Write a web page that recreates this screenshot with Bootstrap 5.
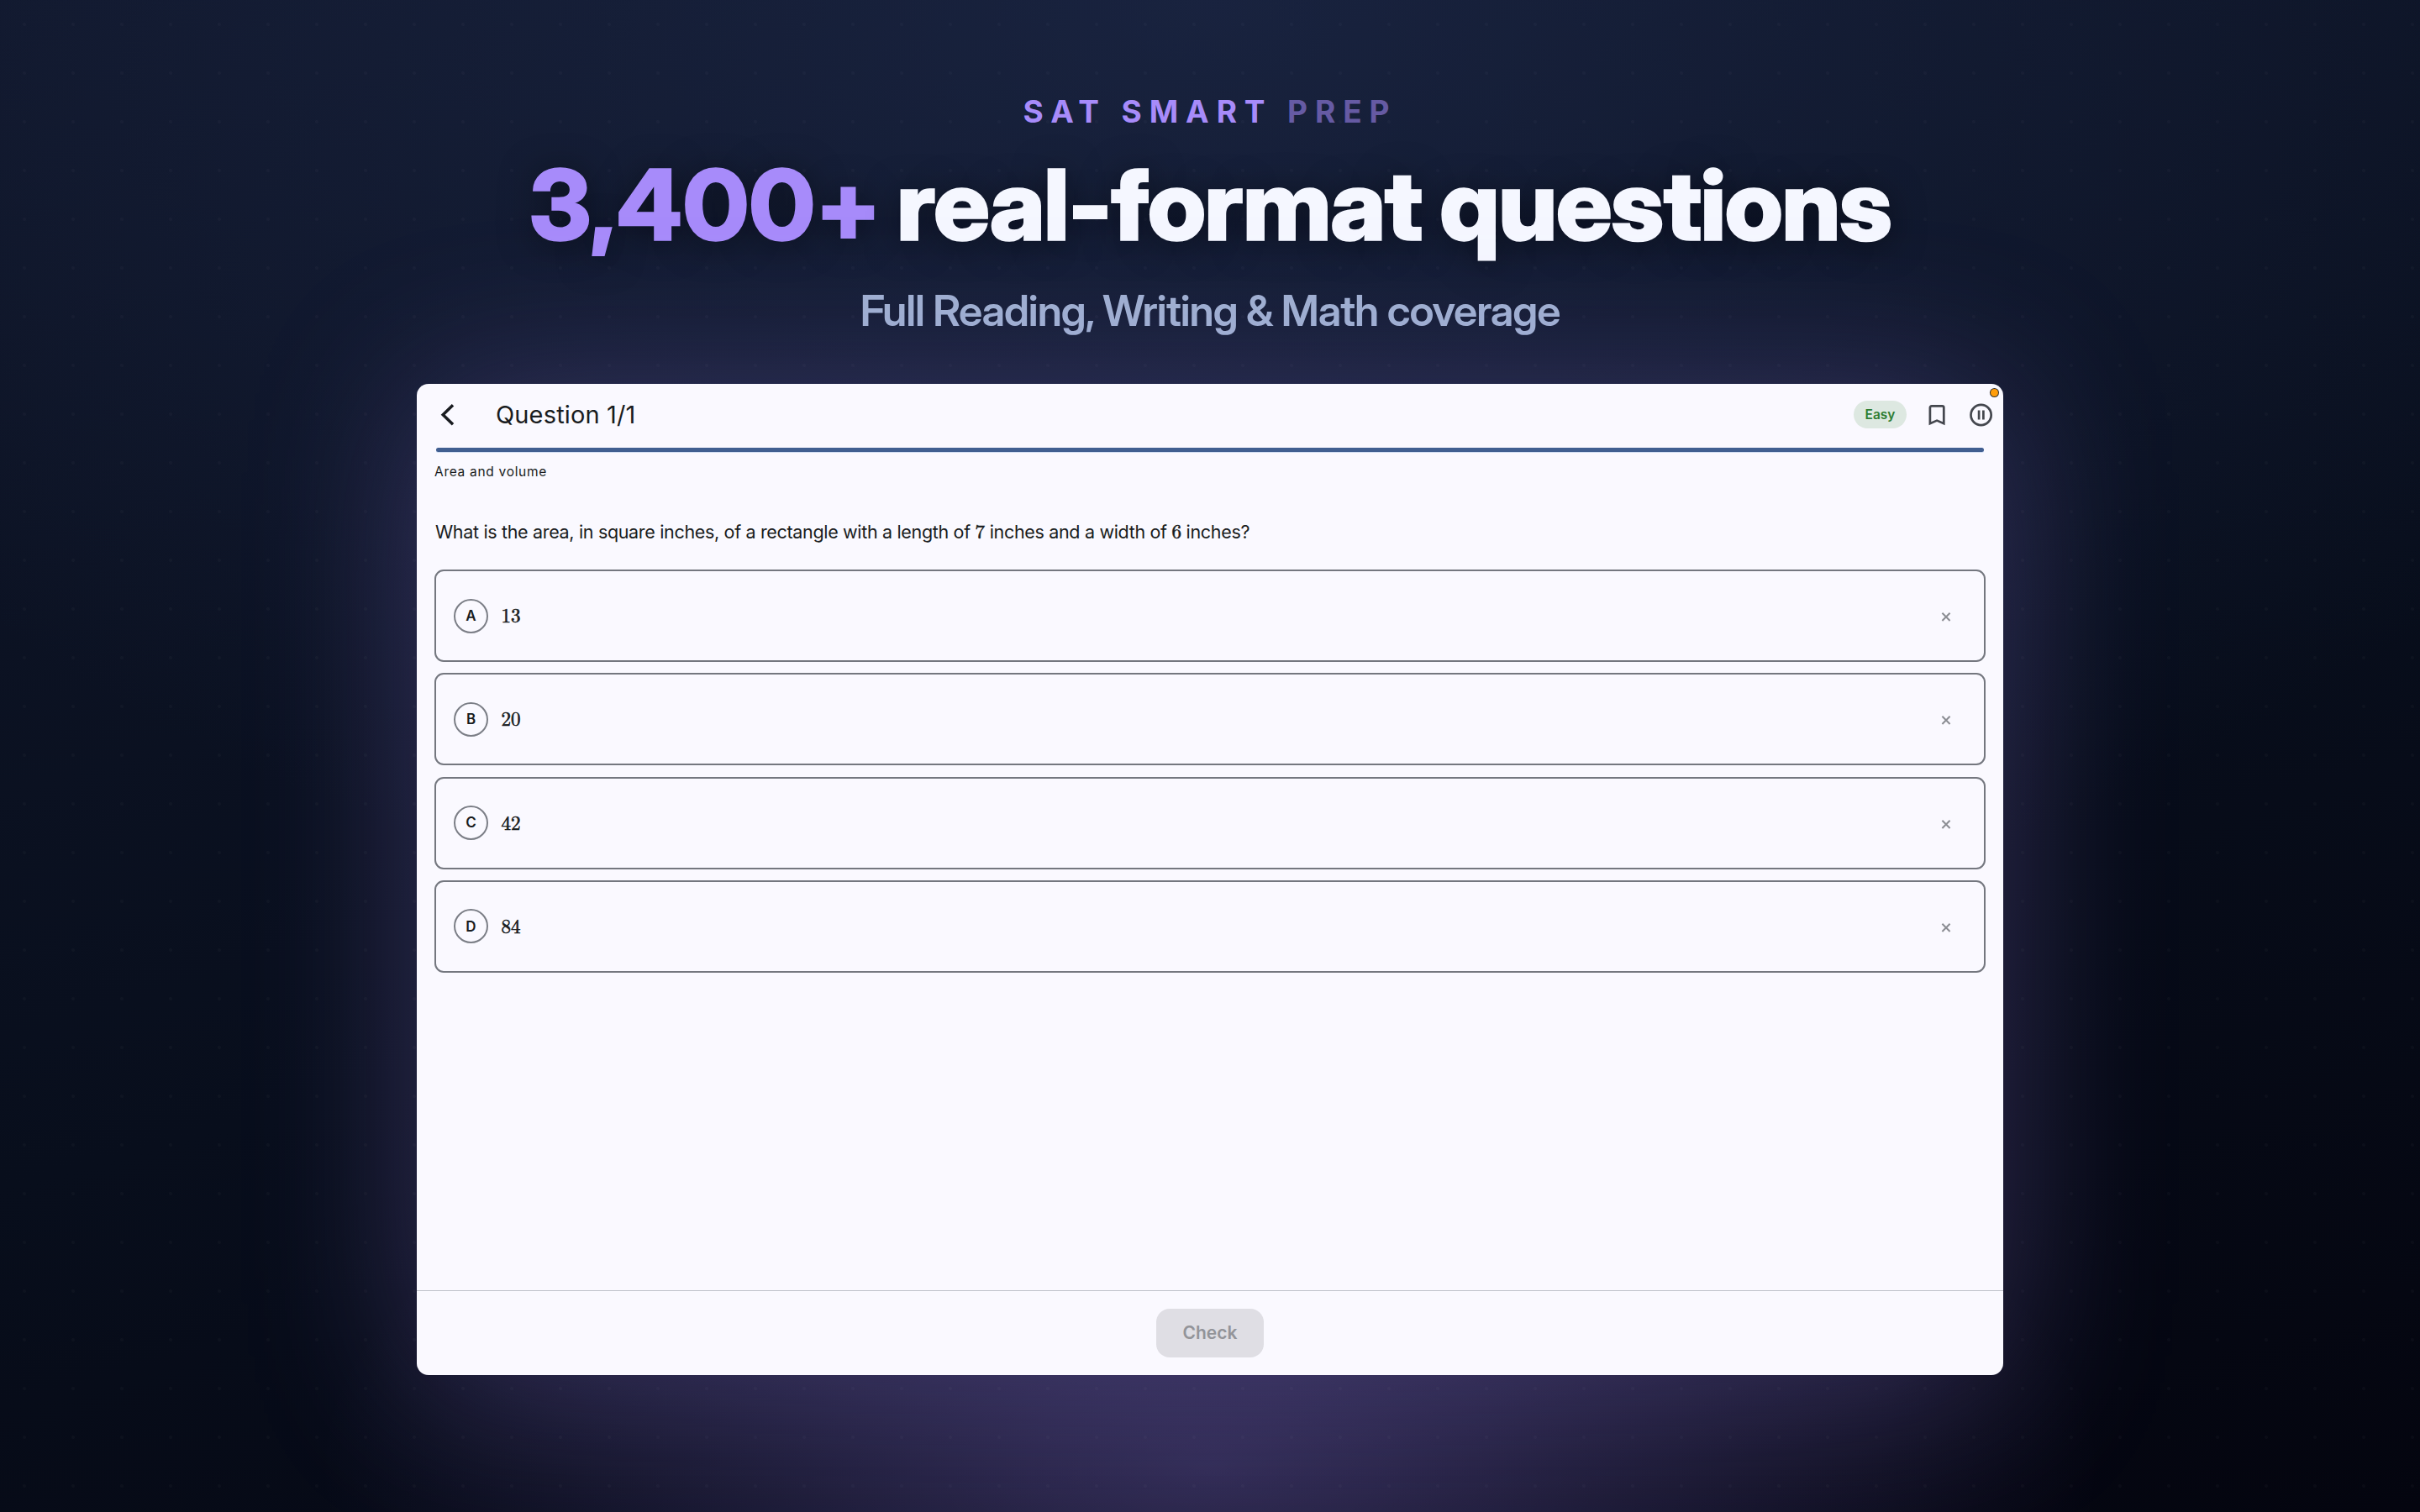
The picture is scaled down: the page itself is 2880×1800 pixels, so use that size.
<!DOCTYPE html>
<html lang="en">
<head>
    <meta charset="UTF-8">
    <meta name="viewport" content="width=device-width, initial-scale=1.0">
    <title>SAT Smart Prep</title>
    <link href="https://cdn.jsdelivr.net/npm/bootstrap@5.3.0/dist/css/bootstrap.min.css" rel="stylesheet">
    <style>
        body {
            font-family: Inter, "Liberation Sans", sans-serif;
            height: 1800px;
            overflow: hidden;
            color: #191c20;
            /* dot grid, bottom glow, top glow, base */
            background:
                radial-gradient(circle at center, rgba(255, 255, 255, 0.022) 0 1.5px, transparent 2.5px) 0 0 / 58px 58px,
                radial-gradient(ellipse 1060px 480px at 50% 1745px, rgba(157, 131, 245, 0.28), rgba(157, 131, 245, 0.23) 20%, transparent),
                radial-gradient(ellipse 1900px 1150px at 50% 0, rgba(38, 52, 92, 0.45), transparent),
                linear-gradient(165deg, #10172b 0%, #080e1c 55%, #04050f 100%);
        }
        .hero { padding-top: 110.5px; }
        .eyebrow {
            font-size: 37px;
            line-height: 44px;
            font-weight: 700;
            letter-spacing: 8.9px;
            color: #a78bfa;
        }
        .eyebrow span { opacity: .55; }
        .headline {
            font-family: "Inter Display", Inter, sans-serif;
            font-size: 117px;
            line-height: 130px;
            font-weight: 800;
            letter-spacing: -1.7px;
            color: #f5f7ff;
            margin: 24px 0 31px;
            -webkit-text-stroke: 1.6px;
            text-shadow: 0 4px 40px rgba(0, 0, 0, 0.5);
        }
        .headline span { color: #a78bfa; letter-spacing: .9px; margin-right: -4px; }
        .tagline {
            font-family: "Inter Display", Inter, sans-serif;
            font-size: 51px;
            line-height: 60px;
            font-weight: 600;
            letter-spacing: -1.05px;
            color: #9fb0d0;
            margin-bottom: 57.5px;
        }
        .app-window {
            width: 1888px;
            height: 1180px;
            border-radius: 14px;
            background: #faf9ff;
            box-shadow: 0 10px 200px rgba(167, 139, 250, 0.27);
        }
        .app-bar { height: 73px; padding: 0 12px 0 26px; }
        .app-title {
            font-size: 29px;
            line-height: 36px;
            letter-spacing: .15px;
            margin-left: 48px;
        }
        .level {
            width: 63px;
            height: 33px;
            background: #dde8e1;
            color: #2e7d32;
            font-size: 15.5px;
            font-weight: 600;
            margin-right: 26px;
        }
        .bookmark { margin-right: 29px; }
        .app-body { padding: 3px 21px 0; }
        .progress-line {
            height: 5px;
            margin: 0 2px;
            border-radius: 3px;
            background: #415f91;
            box-shadow: 0 1px 0 #d0dcf2;
        }
        .topic {
            font-size: 15.5px;
            line-height: 20px;
            letter-spacing: .7px;
            margin: 14px 0 46px 0;
        }
        .prompt {
            font-size: 21.5px;
            line-height: 30px;
            letter-spacing: -.33px;
            margin: 0 0 30px 1px;
        }
        .math {
            font-family: "Latin Modern Roman", "Liberation Serif", serif;
            font-size: 23px;
            line-height: 24px;
            letter-spacing: 0;
            -webkit-text-stroke: .6px;
        }
        .answers { gap: 13.33px; }
        .answer {
            height: 110px;
            border: 2px solid #74777f;
            border-radius: 11px;
            padding: 0 35px 0 21px;
        }
        .answer .math { padding-bottom: 2px; }
        .letter {
            width: 41px;
            height: 41px;
            border: 2px solid #7b7e86;
            font-size: 17px;
            font-weight: 600;
            padding-top: 1px;
            margin-right: 15.5px;
        }
        .app-footer { height: 101px; border-top: 1.5px solid #bfc1ca; }
        .check {
            width: 128px;
            height: 58px;
            border-radius: 16px;
            background: #dfdee4;
            color: #939499;
            font-size: 21px;
            font-weight: 600;
        }
        .rec-dot {
            top: 6px;
            right: 6px;
            width: 9px;
            height: 9px;
            background: #ff9d0a;
            box-shadow: 0 0 0 1px #33302c;
        }
    </style>
</head>
<body>
    <div class="hero d-flex flex-column align-items-center">
        <div class="eyebrow">SAT SMART <span>PREP</span></div>
        <h1 class="headline text-nowrap"><span>3,400+</span> real-format questions</h1>
        <div class="tagline text-nowrap">Full Reading, Writing &amp; Math coverage</div>

        <main class="app-window position-relative d-flex flex-column">
            <div class="rec-dot position-absolute rounded-circle"></div>

            <!-- Top bar -->
            <div class="app-bar d-flex align-items-center">
                <svg width="20" height="28" viewBox="0 0 20 28" fill="none" stroke="#191c20" stroke-width="3.5"><path d="M17 2.3 5.2 13.8 17 25.3"/></svg>
                <div class="app-title">Question 1/1</div>
                <span class="level ms-auto rounded-pill d-flex align-items-center justify-content-center">Easy</span>
                <svg class="bookmark" width="20" height="26" viewBox="0 0 20 26" fill="none" stroke="#44474e" stroke-width="2.7"><path d="M1.9 23.2V4.2a1.9 1.9 0 0 1 1.9-1.9h12.6a1.9 1.9 0 0 1 1.9 1.9v19L10.1 19.6z"/></svg>
                <svg width="28" height="28" viewBox="0 0 28 28" fill="none" stroke="#44474e" stroke-width="2.7"><circle cx="13.6" cy="14" r="12.1"/><path d="M11.1 8.6v10.8M16.4 8.6v10.8"/></svg>
            </div>

            <div class="app-body flex-grow-1">
                <div class="progress-line"></div>
                <div class="topic">Area and volume</div>
                <div class="prompt">What is the area, in square inches, of a rectangle with a length of <span class="math">7</span> inches and a width of <span class="math">6</span> inches?</div>

                <div class="answers d-flex flex-column">
                    <div class="answer d-flex align-items-center">
                        <span class="letter rounded-circle d-flex align-items-center justify-content-center">A</span>
                        <span class="math">13</span>
                        <svg class="ms-auto" width="20" height="20" viewBox="0 0 20 20" stroke="#8b8d93" stroke-width="2"><path d="m5.4 6.8 9.2 9.2m0-9.2-9.2 9.2"/></svg>
                    </div>
                    <div class="answer d-flex align-items-center">
                        <span class="letter rounded-circle d-flex align-items-center justify-content-center">B</span>
                        <span class="math">20</span>
                        <svg class="ms-auto" width="20" height="20" viewBox="0 0 20 20" stroke="#8b8d93" stroke-width="2"><path d="m5.4 6.8 9.2 9.2m0-9.2-9.2 9.2"/></svg>
                    </div>
                    <div class="answer d-flex align-items-center">
                        <span class="letter rounded-circle d-flex align-items-center justify-content-center">C</span>
                        <span class="math">42</span>
                        <svg class="ms-auto" width="20" height="20" viewBox="0 0 20 20" stroke="#8b8d93" stroke-width="2"><path d="m5.4 6.8 9.2 9.2m0-9.2-9.2 9.2"/></svg>
                    </div>
                    <div class="answer d-flex align-items-center">
                        <span class="letter rounded-circle d-flex align-items-center justify-content-center">D</span>
                        <span class="math">84</span>
                        <svg class="ms-auto" width="20" height="20" viewBox="0 0 20 20" stroke="#8b8d93" stroke-width="2"><path d="m5.4 6.8 9.2 9.2m0-9.2-9.2 9.2"/></svg>
                    </div>
                </div>
            </div>

            <div class="app-footer d-flex align-items-center justify-content-center">
                <button class="check btn border-0 p-0">Check</button>
            </div>
        </main>
    </div>
    <script src="https://cdn.jsdelivr.net/npm/bootstrap@5.3.0/dist/js/bootstrap.bundle.min.js"></script>
</body>
</html>
